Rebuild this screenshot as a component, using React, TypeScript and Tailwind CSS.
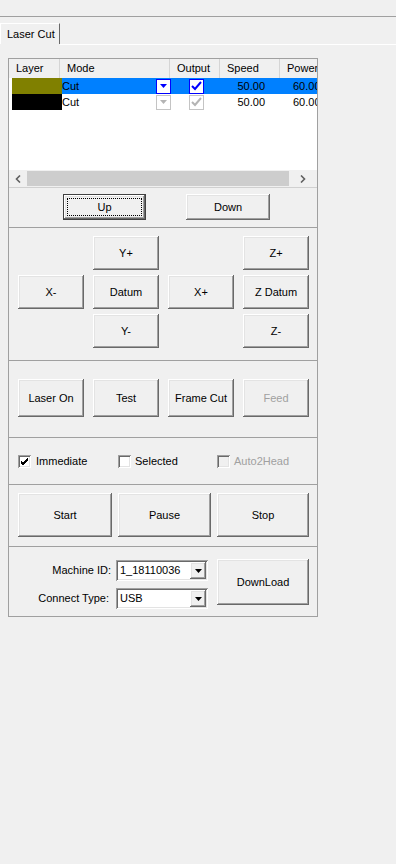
import React from "react";

const raised =
  "shadow-[inset_-1px_-1px_#696969,inset_1px_1px_#ffffff,inset_-2px_-2px_#a0a0a0,inset_2px_2px_#e3e3e3]";
const sunken =
  "shadow-[inset_1px_1px_#a0a0a0,inset_-1px_-1px_#ffffff,inset_2px_2px_#696969,inset_-2px_-2px_#e3e3e3]";

function Btn({ label, className, disabled }: { label: string; className: string; disabled?: boolean }) {
  return (
    <div
      className={`flex items-center justify-center bg-[#f0f0f0] ${raised} ${className} ${
        disabled ? "text-[#a0a0a0]" : "text-black"
      }`}
    >
      {label}
    </div>
  );
}

function Check({ checked, disabled }: { checked?: boolean; disabled?: boolean }) {
  return (
    <div className={`w-[13px] h-[13px] ${sunken} ${disabled ? "bg-[#f0f0f0]" : "bg-white"} flex items-center justify-center`}>
      {checked && (
        <svg width="9" height="9" viewBox="0 0 9 9">
          <path d="M1 4 L3 6 L8 1 M1 5 L3 7 L8 2 M1 6 L3 8 L8 3" stroke="#000" strokeWidth="1" fill="none" />
        </svg>
      )}
    </div>
  );
}

function Combo({ value }: { value: string }) {
  return (
    <div className={`w-[92px] h-[21px] bg-white ${sunken} flex items-center pl-[4px] pr-[2px]`}>
      <span className="flex-1">{value}</span>
      <div className={`w-[16px] h-[17px] bg-[#f0f0f0] ${raised} flex items-center justify-center`}>
        <svg width="7" height="4" viewBox="0 0 7 4">
          <path d="M0 0 H7 L3.5 4 Z" fill="#000" />
        </svg>
      </div>
    </div>
  );
}

function RowDrop({ active }: { active: boolean }) {
  const c = active ? "#0000ff" : "#c4c4c4";
  return (
    <div className="w-[15px] h-[15px] bg-white flex items-center justify-center" style={{ border: `1px solid ${c}` }}>
      <svg width="7" height="4" viewBox="0 0 7 4">
        <path d="M0 0 H7 L3.5 4 Z" fill={active ? "#0000ff" : "#b4b4b4"} />
      </svg>
    </div>
  );
}

function RowCheck({ active }: { active: boolean }) {
  const c = active ? "#0000ff" : "#c4c4c4";
  return (
    <div className="w-[15px] h-[15px] bg-white flex items-center justify-center" style={{ border: `1px solid ${c}` }}>
      <svg width="11" height="10" viewBox="0 0 11 10">
        <path d="M1 5 L4 8 L10 1" stroke={active ? "#0000ff" : "#b4b4b4"} strokeWidth="2" fill="none" />
      </svg>
    </div>
  );
}

export default function App() {
  const rows = [
    { color: "#808000", active: true },
    { color: "#000000", active: false },
  ];

  return (
    <div className="w-[396px] h-[864px] bg-[#f0f0f0] font-['Liberation_Sans',Arial,sans-serif] text-[11px] text-black overflow-hidden">
      <div className="h-[16px]" />
      <div className="h-[1px] bg-[#a0a0a0]" />
      {/* tab strip */}
      <div className="h-[6px]" />
      <div className="flex items-end">
        <div className="h-[21px] w-[60px] bg-[#f0f0f0] border-t border-l border-white border-r border-r-[#696969] flex items-center pl-[6px]">
          Laser Cut
        </div>
      </div>
      <div className="h-[1px] bg-white ml-[60px]" />
      <div className="h-[13px]" />

      {/* main panel */}
      <div className="ml-[8px] w-[310px] border border-[#a0a0a0] flex flex-col">
        {/* layers list + up/down */}
        <div className="h-[168px] flex flex-col">
          <div className="h-[129px] bg-white border-b border-[#d0d0d0] flex flex-col overflow-hidden">
            <div className="h-[19px] flex bg-[#f0f0f0] shrink-0">
              {[
                ["Layer", "w-[51px]"],
                ["Mode", "w-[110px]"],
                ["Output", "w-[50px]"],
                ["Speed", "w-[60px]"],
                ["Power", "w-[60px]"],
              ].map(([t, w]) => (
                <div key={t} className={`${w} shrink-0 pl-[7px] flex items-center border-r border-[#d5d5d5] whitespace-nowrap`}>
                  {t}
                </div>
              ))}
            </div>
            {rows.map((r, i) => (
              <div key={i} className="h-[16px] flex pl-[3px] shrink-0">
                <div className="w-[50px] shrink-0" style={{ backgroundColor: r.color }} />
                <div className={`flex flex-1 ${r.active ? "bg-[#0080ff]" : "bg-white"}`}>
                  <div className="w-[110px] shrink-0 flex items-center justify-between pr-[1px]">
                    <span>Cut</span>
                    <RowDrop active={r.active} />
                  </div>
                  <div className="w-[47px] shrink-0 flex items-center pl-[17px]">
                    <RowCheck active={r.active} />
                  </div>
                  <div className="w-[60px] shrink-0 flex items-center justify-end pr-[14px]">50.00</div>
                  <div className="w-[60px] shrink-0 flex items-center pl-[14px]">60.00</div>
                </div>
              </div>
            ))}
            <div className="flex-1" />
            <div className="h-[17px] bg-[#f0f0f0] flex items-center shrink-0">
              <div className="w-[18px] flex items-center justify-center">
                <svg width="6" height="8" viewBox="0 0 6 8">
                  <path d="M5 0.5 L1.5 4 L5 7.5" stroke="#606060" strokeWidth="1.6" fill="none" />
                </svg>
              </div>
              <div className="w-[262px] h-[15px] bg-[#cdcdcd]" />
              <div className="flex-1 flex items-center justify-center">
                <svg width="6" height="8" viewBox="0 0 6 8">
                  <path d="M1 0.5 L4.5 4 L1 7.5" stroke="#606060" strokeWidth="1.6" fill="none" />
                </svg>
              </div>
            </div>
          </div>
          <div className="flex pl-[54px] gap-[40px] mt-[6px]">
            <div className="w-[83px] h-[26px] border border-[#404040] bg-[#f0f0f0] flex">
              <div className={`flex-1 ${raised} p-[3px] flex`}>
                <div className="flex-1 border border-dotted border-black flex items-center justify-center">Up</div>
              </div>
            </div>
            <Btn label="Down" className="w-[84px] h-[26px]" />
          </div>
        </div>

        {/* jog section */}
        <div className="border-t border-[#a0a0a0] h-[133px] pt-[8px] pl-[9px] grid grid-cols-[66px_66px_66px_66px] grid-rows-[34px_34px_34px] gap-x-[9px] gap-y-[5px] content-start">
          <div />
          <Btn label="Y+" className="" />
          <div />
          <Btn label="Z+" className="" />
          <Btn label="X-" className="" />
          <Btn label="Datum" className="" />
          <Btn label="X+" className="" />
          <Btn label="Z Datum" className="" />
          <div />
          <Btn label="Y-" className="" />
          <div />
          <Btn label="Z-" className="" />
        </div>

        {/* laser section */}
        <div className="border-t border-[#a0a0a0] h-[77px] pt-[18px] pl-[9px] flex gap-[9px]">
          <Btn label="Laser On" className="w-[66px] h-[38px]" />
          <Btn label="Test" className="w-[66px] h-[38px]" />
          <Btn label="Frame Cut" className="w-[66px] h-[38px]" />
          <Btn label="Feed" className="w-[66px] h-[38px]" disabled />
        </div>

        {/* options */}
        <div className="border-t border-[#a0a0a0] h-[47px] pl-[9px] flex items-center">
          <div className="w-[100px] flex items-center gap-[5px]">
            <Check checked />
            <span>Immediate</span>
          </div>
          <div className="w-[99px] flex items-center gap-[4px]">
            <Check />
            <span>Selected</span>
          </div>
          <div className="flex items-center gap-[4px] text-[#a0a0a0]">
            <Check disabled />
            <span>Auto2Head</span>
          </div>
        </div>

        {/* start / pause / stop */}
        <div className="border-t border-[#a0a0a0] h-[62px] pt-[8px] pl-[9px] flex gap-[6px]">
          <Btn label="Start" className="w-[94px] h-[44px]" />
          <Btn label="Pause" className="w-[93px] h-[44px]" />
          <Btn label="Stop" className="w-[92px] h-[44px]" />
        </div>

        {/* machine */}
        <div className="border-t border-[#a0a0a0] h-[70px] flex pt-[12px]">
          <div className="w-[199px] flex flex-col gap-[7px] pt-[1px]">
            <div className="flex items-center justify-end gap-[5px]">
              <span>Machine ID:</span>
              <Combo value="1_18110036" />
            </div>
            <div className="flex items-center justify-end gap-[7px]">
              <span>Connect Type:</span>
              <Combo value="USB" />
            </div>
          </div>
          <Btn label="DownLoad" className="ml-[9px] w-[92px] h-[46px]" />
        </div>
      </div>
    </div>
  );
}
